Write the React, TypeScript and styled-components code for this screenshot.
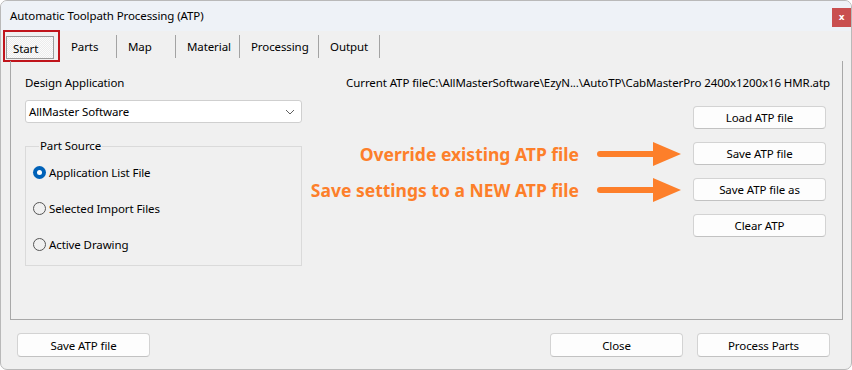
import React from 'react'
import styled, { createGlobalStyle } from 'styled-components'

const GlobalStyle = createGlobalStyle`
  html, body {
    margin: 0;
    padding: 0;
    background: #ffffff;
  }
  body {
    font-family: 'Noto Sans', 'Liberation Sans', sans-serif;
    font-size: 11.5px;
    letter-spacing: -0.1px;
    color: #000000;
  }
  * {
    box-sizing: border-box;
  }
`

const ORANGE = '#fd7f2a'

const Window = styled.div`
  width: 852px;
  height: 370px;
  display: flex;
  flex-direction: column;
  border: 1px solid #b9b9b9;
  border-radius: 7px;
  overflow: hidden;
  background: #f0f0f0;
`

const TitleBar = styled.div`
  height: 30px;
  flex: 0 0 30px;
  display: flex;
  align-items: flex-start;
  justify-content: space-between;
  padding-left: 9px;
  background: #eef2f7;
`

const Title = styled.div`
  line-height: 30px;
  white-space: nowrap;
`

const CloseButton = styled.div`
  width: 19px;
  height: 19px;
  margin-top: 7px;
  display: flex;
  align-items: center;
  justify-content: center;
  background: #c94f4f;
  color: #ffffff;
  font-family: 'DejaVu Sans', sans-serif;
  font-size: 9px;
  font-weight: bold;
  line-height: 1;
`

const TabStrip = styled.div`
  height: 30px;
  flex: 0 0 30px;
  display: flex;
  align-items: center;
  padding-left: 2px;
`

const RedFrame = styled.div`
  height: 32px;
  padding: 4px 4px 2px 1px;
  border: 2px solid #c0141b;
  display: flex;
`

const ActiveTab = styled.div`
  width: 48px;
  height: 23px;
  padding-left: 6px;
  display: flex;
  align-items: center;
  padding-top: 2px;
  border: 1px solid #9c9c9c;
  background: repeating-conic-gradient(#ececec 0 25%, #fbfbfb 0 50%) 0 0 / 2px 2px;
`

const Tab = styled.div<{ $width: number }>`
  width: ${( { $width } ) => $width}px;
  height: 23px;
  padding-left: 11px;
  display: flex;
  align-items: center;
  white-space: nowrap;
  border-right: 1px solid #a3a3a3;
`

const Panel = styled.div`
  flex: 0 0 259px;
  margin: 0 8px 0 9px;
  border: 1px solid #a8a8a8;
  border-top: none;
  display: grid;
  grid-template-columns: 277px 1fr;
  padding: 14px 16px 0 14px;
`

const LeftColumn = styled.div`
  display: flex;
  flex-direction: column;
`

const Label = styled.div`
  line-height: 16px;
  white-space: nowrap;
`

const Combo = styled.div`
  margin-top: 9px;
  height: 23px;
  display: flex;
  align-items: center;
  justify-content: space-between;
  padding: 0 6px 0 3px;
  background: #ffffff;
  border: 1px solid #cfcfcf;
  border-radius: 3px;
`

const GroupBox = styled.fieldset`
  margin: 15px 0 0 0;
  padding: 10px 6px 13px 7px;
  border: 1px solid #dadada;
  display: flex;
  flex-direction: column;
  gap: 20px;
  min-width: 0;
`

const Legend = styled.legend`
  margin-left: 6px;
  padding: 0 1px;
  line-height: 16px;
`

const RadioRow = styled.label`
  display: flex;
  align-items: center;
  gap: 3px;
  height: 16px;
  white-space: nowrap;
`

const RadioDot = styled.span<{ $checked?: boolean }>`
  width: 13px;
  height: 13px;
  border-radius: 50%;
  flex: 0 0 13px;
  background: ${( { $checked } ) => ( $checked ? '#0062b8' : 'transparent' )};
  border: ${( { $checked } ) => ( $checked ? 'none' : '1px solid #555555' )};
  display: flex;
  align-items: center;
  justify-content: center;

  &::after {
    content: '';
    width: 5px;
    height: 5px;
    border-radius: 50%;
    background: #ffffff;
    display: ${( { $checked } ) => ( $checked ? 'block' : 'none' )};
  }
`

const RightColumn = styled.div`
  display: flex;
  flex-direction: column;
  align-items: flex-end;
`

const FileLine = styled.div`
  line-height: 16px;
  white-space: nowrap;
  margin-right: -4px;
  margin-bottom: 15px;
`

const ButtonStack = styled.div`
  display: flex;
  flex-direction: column;
  gap: 13px;
  width: 100%;
`

const ActionRow = styled.div`
  display: flex;
  align-items: center;
  justify-content: flex-end;
  height: 23px;
`

const Note = styled.div`
  display: flex;
  align-items: center;
  margin-right: 11px;
  gap: 18px;
`

const NoteText = styled.span`
  color: ${ORANGE};
  font-weight: bold;
  font-size: 17.5px;
  letter-spacing: 0;
  white-space: nowrap;
`

const Button = styled.div<{ $tall?: boolean }>`
  width: 133px;
  height: ${( { $tall } ) => ( $tall ? 24 : 23 )}px;
  flex: 0 0 auto;
  display: flex;
  align-items: center;
  justify-content: center;
  background: #fdfdfd;
  border: 1px solid #d3d3d3;
  border-bottom-color: #c2c2c2;
  border-radius: 4px;
  white-space: nowrap;
`

const Footer = styled.div`
  flex: 1;
  display: flex;
  align-items: flex-start;
  gap: 14px;
  padding: 13px 21px 0 16px;
`

const Spacer = styled.div`
  flex: 1;
`

function Chevron () {
    return (
        <svg width="10" height="6" viewBox="0 0 10 6">
            <path d="M1 1 L5 5 L9 1" fill="none" stroke="#606060" strokeWidth="1" />
        </svg>
    )
}

function Arrow () {
    return (
        <svg width="85" height="26" viewBox="0 0 85 26">
            <rect x="0" y="10" width="60" height="6" rx="3" fill={ ORANGE } />
            <polygon points="56,1 84,13 56,25" fill={ ORANGE } />
        </svg>
    )
}

const tabs = [
    { label: 'Parts', width: 57 },
    { label: 'Map', width: 59 },
    { label: 'Material', width: 64 },
    { label: 'Processing', width: 79 },
    { label: 'Output', width: 61 },
]

const sources = [
    { label: 'Application List File', checked: true },
    { label: 'Selected Import Files', checked: false },
    { label: 'Active Drawing', checked: false },
]

const actions: { label: string; note?: string }[] = [
    { label: 'Load ATP file' },
    { label: 'Save ATP file', note: 'Override existing ATP file' },
    { label: 'Save ATP file as', note: 'Save settings to a NEW ATP file' },
    { label: 'Clear ATP' },
]

export default function App () {
    return (
        <>
            <GlobalStyle />
            <Window>
                <TitleBar>
                    <Title>Automatic Toolpath Processing (ATP)</Title>
                    <CloseButton>x</CloseButton>
                </TitleBar>
                <TabStrip>
                    <RedFrame>
                        <ActiveTab>Start</ActiveTab>
                    </RedFrame>
                    { tabs.map( ( tab ) => (
                        <Tab key={ tab.label } $width={ tab.width }>
                            { tab.label }
                        </Tab>
                    ) ) }
                </TabStrip>
                <Panel>
                    <LeftColumn>
                        <Label>Design Application</Label>
                        <Combo>
                            <span>AllMaster Software</span>
                            <Chevron />
                        </Combo>
                        <GroupBox>
                            <Legend>Part Source</Legend>
                            { sources.map( ( source ) => (
                                <RadioRow key={ source.label }>
                                    <RadioDot $checked={ source.checked } />
                                    { source.label }
                                </RadioRow>
                            ) ) }
                        </GroupBox>
                    </LeftColumn>
                    <RightColumn>
                        <FileLine>
                            Current ATP fileC:\AllMasterSoftware\EzyN...\AutoTP\CabMasterPro 2400x1200x16 HMR.atp
                        </FileLine>
                        <ButtonStack>
                            { actions.map( ( action ) => (
                                <ActionRow key={ action.label }>
                                    { action.note ? (
                                        <Note>
                                            <NoteText>{ action.note }</NoteText>
                                            <Arrow />
                                        </Note>
                                    ) : null }
                                    <Button>{ action.label }</Button>
                                </ActionRow>
                            ) ) }
                        </ButtonStack>
                    </RightColumn>
                </Panel>
                <Footer>
                    <Button $tall>Save ATP file</Button>
                    <Spacer />
                    <Button $tall>Close</Button>
                    <Button $tall>Process Parts</Button>
                </Footer>
            </Window>
        </>
    )
}
